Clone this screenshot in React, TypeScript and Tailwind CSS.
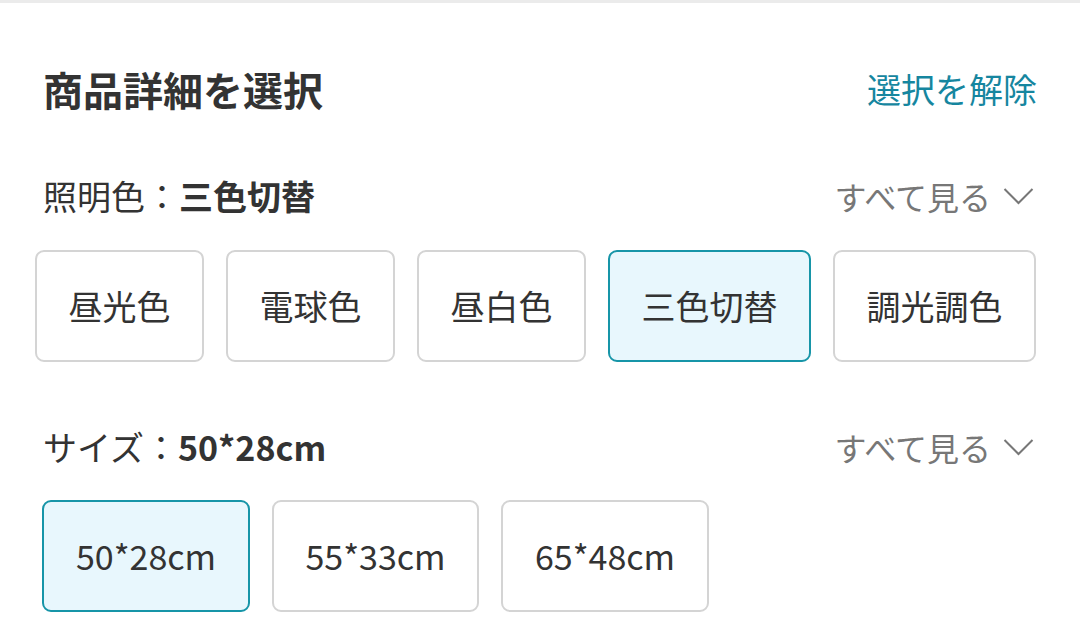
import React, { useState } from 'react';

const FONT = '"Noto Sans CJK JP", "Noto Sans", sans-serif';

type Group = {
  label: string;
  options: { text: string; w: string }[];
};

const groups: Group[] = [
  {
    label: '照明色',
    options: [
      { text: '昼光色', w: 'w-[169px]' },
      { text: '電球色', w: 'w-[169px]' },
      { text: '昼白色', w: 'w-[169px]' },
      { text: '三色切替', w: 'w-[203px]' },
      { text: '調光調色', w: 'w-[203px]' },
    ],
  },
  {
    label: 'サイズ',
    options: [
      { text: '50*28cm', w: 'w-[208px]' },
      { text: '55*33cm', w: 'w-[207px]' },
      { text: '65*48cm', w: 'w-[208px]' },
    ],
  },
];

function Chevron() {
  return (
    <svg width="31" height="18" viewBox="0 0 31 18" fill="none" className="ml-[12px] shrink-0">
      <path d="M1.5 2 L15.5 16 L29.5 2" stroke="#777" strokeWidth="2" />
    </svg>
  );
}

function OptionButton({ text, w, selected, onClick }: { text: string; w: string; selected: boolean; onClick: () => void }) {
  return (
    <button
      onClick={onClick}
      className={
        (selected
          ? 'border-[#1795a8] bg-[#e8f7fd] '
          : 'border-[#d4d4d4] bg-white ') +
        w +
        ' shrink-0 whitespace-nowrap h-[112px] rounded-[9px] border-2 text-[34px] text-[#333] leading-none'
      }
    >
      {text}
    </button>
  );
}

export default function App() {
  const [picked, setPicked] = useState<string[]>(['三色切替', '50*28cm']);

  return (
    <div className="w-[1080px] h-[636px] bg-white overflow-hidden border-t-[3px] border-[#ebebeb]" style={{ fontFamily: FONT }}>
      <div className="px-[43px]">
        {/* header */}
        <div className="flex items-center justify-between h-[40px] mt-[66px]">
          <h1 className="text-[40px] font-bold text-[#333] leading-none whitespace-nowrap">商品詳細を選択</h1>
          <button
            className="text-[34px] text-[#16869f] leading-none whitespace-nowrap"
            onClick={() => setPicked(['', ''])}
          >
            選択を解除
          </button>
        </div>

        {groups.map((g, i) => (
          <div key={g.label} className={i === 0 ? 'mt-[69px]' : 'mt-[67px]'}>
            <div className="flex items-center justify-between h-[36px]">
              <div className="text-[34px] text-[#333] leading-none whitespace-nowrap">
                {g.label}：<span className="font-bold">{picked[i]}</span>
              </div>
              <div className="flex items-center text-[32px] text-[#777] leading-none whitespace-nowrap mr-[3px]">
                すべて見る
                <Chevron />
              </div>
            </div>
            <div className={i === 0 ? 'flex gap-[22px] mt-[36px] -ml-[8px]' : 'flex gap-[22px] mt-[35px] -ml-[1px]'}>
              {g.options.map((o) => (
                <OptionButton
                  key={o.text}
                  text={o.text}
                  w={o.w}
                  selected={picked[i] === o.text}
                  onClick={() => setPicked((p) => p.map((v, j) => (j === i ? o.text : v)))}
                />
              ))}
            </div>
          </div>
        ))}
      </div>
    </div>
  );
}
